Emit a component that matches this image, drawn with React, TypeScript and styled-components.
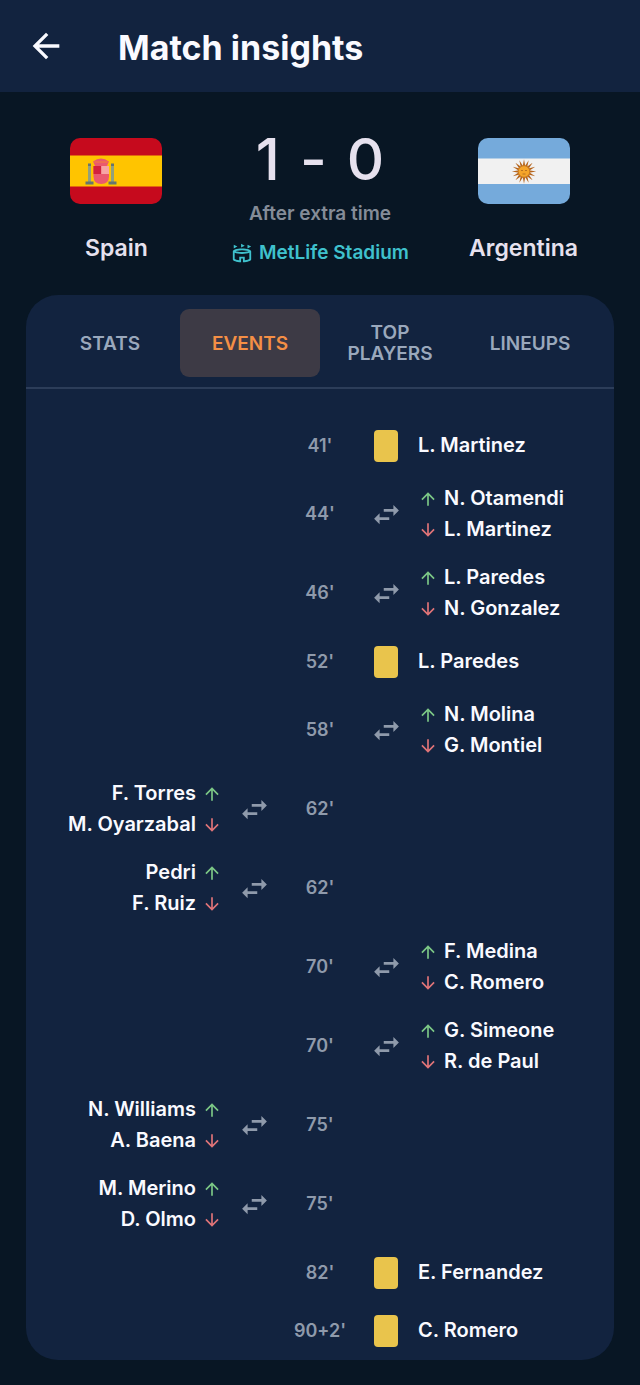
import React from "react";
import styled, { createGlobalStyle } from "styled-components";
import {
  MdArrowBack,
  MdArrowDownward,
  MdArrowUpward,
  MdOutlineStadium,
  MdSwapHoriz,
} from "react-icons/md";

const color = {
  page: "#081624",
  panel: "#12233f",
  line: "#2c3d59",
  text: "#fafaff",
  score: "#e6e1ee",
  note: "#848c98",
  muted: "#8f9aab",
  tab: "#9aa8bc",
  teal: "#3fc1cd",
  orange: "#f58f45",
  activeTab: "#3d3a45",
  card: "#e9c44c",
  up: "#7cc886",
  down: "#e07478",
};

const GlobalStyle = createGlobalStyle`
  *, *::before, *::after { box-sizing: border-box; }
  body {
    margin: 0;
    background: ${color.page};
    color: ${color.text};
    font-family: Inter, "Liberation Sans", sans-serif;
    font-weight: 600;
  }
`;

const Page = styled.div`
  display: flex;
  flex-direction: column;
  padding-bottom: 25px;
`;

const TopBar = styled.header`
  display: flex;
  align-items: center;
  gap: 52px;
  height: 92px;
  padding: 0 26px;
  background: ${color.panel};
`;

const BackButton = styled.button`
  display: flex;
  padding: 0;
  border: 0;
  background: none;
  color: ${color.text};
  font-size: 40px;
  cursor: pointer;
`;

const Title = styled.h1`
  margin: 0;
  padding-top: 3px;
  font-size: 34px;
  line-height: 44px;
  font-weight: 700;
  white-space: nowrap;
`;

const Summary = styled.section`
  display: grid;
  grid-template-columns: 4fr 5fr 4fr;
  padding: 36px 26px 30px;
`;

const Team = styled.div`
  display: flex;
  flex-direction: column;
  align-items: center;
  gap: 28px;
  padding-top: 10px;
`;

const Flag = styled.svg`
  display: block;
  width: 92px;
  height: 66px;
  border-radius: 10px;
`;

const TeamName = styled.h2`
  margin: 0;
  color: ${color.score};
  font-size: 23px;
  line-height: 32px;
  font-weight: 600;
`;

const Result = styled.div`
  display: flex;
  flex-direction: column;
  align-items: center;
`;

const Score = styled.div`
  display: flex;
  gap: 20px;
  color: ${color.score};
  font-size: 58px;
  line-height: 62px;
  font-weight: 500;
`;

const Note = styled.p`
  margin: 12px 0 0;
  color: ${color.note};
  font-size: 19px;
  line-height: 24px;
`;

const Venue = styled.a`
  display: flex;
  align-items: center;
  gap: 6px;
  margin-top: 15px;
  color: ${color.teal};
  font-size: 19px;
  line-height: 24px;
  text-decoration: none;
  white-space: nowrap;

  svg {
    font-size: 22px;
  }
`;

const Panel = styled.main`
  margin: 0 26px;
  border-radius: 32px;
  background: ${color.panel};
`;

const Tabs = styled.div`
  display: grid;
  grid-template-columns: repeat(4, 1fr);
  padding: 14px 14px 10px;
  border-bottom: 2px solid ${color.line};
`;

const Tab = styled.button<{ $active: boolean }>`
  height: 68px;
  padding: 0 20px;
  border: 0;
  border-radius: 9px;
  background: ${(p) => (p.$active ? color.activeTab : "transparent")};
  color: ${(p) => (p.$active ? color.orange : color.tab)};
  font: 600 19px/21px Inter, "Liberation Sans", sans-serif;
  cursor: pointer;
`;

const EventList = styled.ol`
  display: flex;
  flex-direction: column;
  gap: 17px;
  margin: 0;
  padding: 36px 0 9px;
  list-style: none;
`;

const EventRow = styled.li<{ $sub: boolean }>`
  display: grid;
  grid-template-columns: 1fr 40px 92px 40px 1fr;
  align-items: center;
  height: ${(p) => (p.$sub ? 62 : 41)}px;
`;

const Minute = styled.time`
  grid-column: 3;
  grid-row: 1;
  color: ${color.muted};
  font-size: 18px;
  line-height: 24px;
  text-align: center;
`;

const Kind = styled.div<{ $home: boolean }>`
  display: flex;
  grid-column: ${(p) => (p.$home ? 2 : 4)};
  grid-row: 1;
  justify-content: center;
  color: ${color.muted};
  font-size: 33px;
`;

const YellowCard = styled.div`
  width: 24px;
  height: 32px;
  border-radius: 4px;
  background: ${color.card};
`;

const Players = styled.div<{ $home: boolean }>`
  grid-column: ${(p) => (p.$home ? 1 : 5)};
  grid-row: 1;
  padding: 0 12px;
`;

const Player = styled.div<{ $home: boolean }>`
  display: flex;
  flex-direction: ${(p) => (p.$home ? "row-reverse" : "row")};
  align-items: center;
  gap: 6px;
  font-size: 20px;
  line-height: 31px;
  white-space: nowrap;
`;

const Direction = styled.span<{ $up: boolean }>`
  display: flex;
  color: ${(p) => (p.$up ? color.up : color.down)};
`;

type MatchEvent = {
  minute: string;
  home?: boolean;
  booked?: string;
  on?: string;
  off?: string;
};

const events: MatchEvent[] = [
  { minute: "41'", booked: "L. Martinez" },
  { minute: "44'", on: "N. Otamendi", off: "L. Martinez" },
  { minute: "46'", on: "L. Paredes", off: "N. Gonzalez" },
  { minute: "52'", booked: "L. Paredes" },
  { minute: "58'", on: "N. Molina", off: "G. Montiel" },
  { minute: "62'", home: true, on: "F. Torres", off: "M. Oyarzabal" },
  { minute: "62'", home: true, on: "Pedri", off: "F. Ruiz" },
  { minute: "70'", on: "F. Medina", off: "C. Romero" },
  { minute: "70'", on: "G. Simeone", off: "R. de Paul" },
  { minute: "75'", home: true, on: "N. Williams", off: "A. Baena" },
  { minute: "75'", home: true, on: "M. Merino", off: "D. Olmo" },
  { minute: "82'", booked: "E. Fernandez" },
  { minute: "90+2'", booked: "C. Romero" },
];

const tabs = ["STATS", "EVENTS", "TOP PLAYERS", "LINEUPS"];

function SpainFlag() {
  return (
    <Flag viewBox="0 0 92 66" role="img" aria-label="Flag of Spain">
      <rect width="92" height="66" fill="#c60a1d" />
      <rect y="17.5" width="92" height="31" fill="#ffc400" />
      <g fill="#93a07c">
        <rect x="18" y="27" width="3" height="18" />
        <rect x="41" y="27" width="3" height="18" />
      </g>
      <g fill="#66756f">
        <rect x="18" y="25.5" width="3" height="2.5" />
        <rect x="41" y="25.5" width="3" height="2.5" />
        <rect x="15.5" y="43.5" width="8" height="3" />
        <rect x="38.5" y="43.5" width="8" height="3" />
      </g>
      <path d="M23 23.5q4-3 8-3t8 3l-2 4.500H25z" fill="#ea596e" />
      <path d="M24.5 24h13" stroke="#f5803c" strokeWidth="1" />
      <path d="M23.5 28h15.5v10.5q0 7.5-7.75 7.5t-7.75-7.5z" fill="#ea596e" />
      <path d="M23.5 28h7.75v8h-7.75z" fill="#d4213d" />
      <path d="M31.25 28H39v8h-7.75z" fill="#f7a4a4" />
    </Flag>
  );
}

function ArgentinaFlag() {
  const rays = Array.from({ length: 16 }, (_, i) => i * 22.5);
  return (
    <Flag viewBox="0 0 92 66" role="img" aria-label="Flag of Argentina">
      <rect width="92" height="66" fill="#75aadb" />
      <rect y="20.5" width="92" height="25.5" fill="#f1f1f1" />
      <g transform="translate(46 33.5)">
        {rays.map((a) => (
          <path key={a} d="M-1.3-5 0-12.2 1.3-5z" fill="#b5651d" transform={`rotate(${a})`} />
        ))}
        <circle r="5.8" fill="#f5a52a" stroke="#c97a20" strokeWidth="1" />
        <path d="M-3-1h2M1-1h2M-1.5 2.5h3" stroke="#a86420" strokeWidth=".8" />
      </g>
    </Flag>
  );
}

function EventItem({ event }: { event: MatchEvent }) {
  const home = Boolean(event.home);
  const sub = !event.booked;
  return (
    <EventRow $sub={sub}>
      <Minute>{event.minute}</Minute>
      <Kind $home={home}>
        {sub ? (
          <MdSwapHoriz aria-label="Substitution" />
        ) : (
          <YellowCard role="img" aria-label="Yellow card" />
        )}
      </Kind>
      <Players $home={home}>
        {sub ? (
          <>
            <Player $home={home}>
              <Direction $up>
                <MdArrowUpward aria-label="On" />
              </Direction>
              {event.on}
            </Player>
            <Player $home={home}>
              <Direction $up={false}>
                <MdArrowDownward aria-label="Off" />
              </Direction>
              {event.off}
            </Player>
          </>
        ) : (
          <Player $home={home}>{event.booked}</Player>
        )}
      </Players>
    </EventRow>
  );
}

export default function App() {
  const [active, setActive] = React.useState("EVENTS");
  return (
    <Page>
      <GlobalStyle />
      <TopBar>
        <BackButton type="button" aria-label="Back">
          <MdArrowBack />
        </BackButton>
        <Title>Match insights</Title>
      </TopBar>
      <Summary>
        <Team>
          <SpainFlag />
          <TeamName>Spain</TeamName>
        </Team>
        <Result>
          <Score>
            <span>1</span>
            <span>-</span>
            <span>0</span>
          </Score>
          <Note>After extra time</Note>
          <Venue href="#stadium">
            <MdOutlineStadium aria-hidden="true" />
            MetLife Stadium
          </Venue>
        </Result>
        <Team>
          <ArgentinaFlag />
          <TeamName>Argentina</TeamName>
        </Team>
      </Summary>
      <Panel>
        <Tabs role="tablist">
          {tabs.map((tab) => (
            <Tab
              key={tab}
              type="button"
              role="tab"
              aria-selected={tab === active}
              $active={tab === active}
              onClick={() => setActive(tab)}
            >
              {tab}
            </Tab>
          ))}
        </Tabs>
        <EventList>
          {events.map((event, i) => (
            <EventItem key={i} event={event} />
          ))}
        </EventList>
      </Panel>
    </Page>
  );
}
